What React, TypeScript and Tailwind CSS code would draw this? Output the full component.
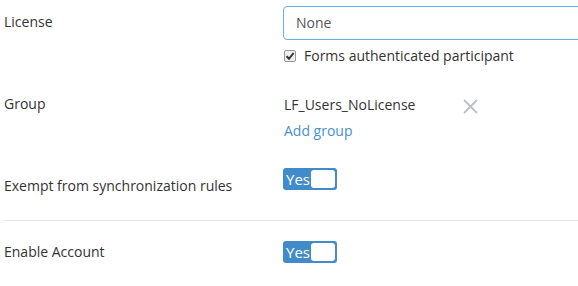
const Toggle = () => (
  <div className="w-[54px] h-[22px] bg-[#428bca] rounded-[3px] flex items-center justify-between pl-[3px] pr-[2px]">
    <span className="text-white text-[15px] leading-none">Yes</span>
    <span className="w-[24px] h-[18px] bg-white rounded-[3px]"></span>
  </div>
);

export default function App() {
  return (
    <div className="w-[578px] h-[286px] overflow-hidden bg-white font-['Open_Sans',sans-serif] text-[14px] text-[#333]">
      <div className="flex pt-[6px]">
        <div className="w-[283px] shrink-0 pl-[4px] leading-[32px]">License</div>
        <div className="flex-1 min-w-0">
          <div className="w-[320px] h-[34px] border border-[#66afe9] rounded-[4px] pl-[12px] pb-[2px] flex items-center text-[#555]">
            None
          </div>
          <div className="mt-[7px] h-[18px] flex items-center gap-[8px] pl-[1px] pb-[1px]">
            <span className="w-[12px] h-[12px] border border-[#999] rounded-[2px] bg-[#eee] flex items-center justify-center">
              <svg width="10" height="10" viewBox="0 0 10 10">
                <path d="M1.5 5.2 L4 7.8 L8.6 2" stroke="#333" strokeWidth="2" fill="none" />
              </svg>
            </span>
            <span>Forms authenticated participant</span>
          </div>
        </div>
      </div>

      <div className="flex mt-[29px]">
        <div className="w-[283px] shrink-0 pl-[4px] leading-[20px]">Group</div>
        <div className="flex-1 min-w-0">
          <div className="flex items-center h-[20px] pl-[1px]">
            <span className="w-[179px]">LF_Users_NoLicense</span>
            <svg width="15" height="15" viewBox="0 0 15 15" className="mt-[4px]">
              <path d="M1 1 L14 14 M14 1 L1 14" stroke="#b8c0cc" strokeWidth="1.8" />
            </svg>
          </div>
          <div className="mt-[7px] leading-[20px] pl-[1px] text-[#4a8fd4]">Add group</div>
        </div>
      </div>

      <div className="flex mt-[27px] items-start">
        <div className="w-[283px] shrink-0 pl-[4px] leading-[20px] mt-[8px]">Exempt from synchronization rules</div>
        <Toggle />
      </div>

      <div className="ml-[3px] mt-[24px] h-px bg-[#e5e5e5]"></div>

      <div className="flex mt-[20px] items-start">
        <div className="w-[283px] shrink-0 pl-[4px] leading-[20px] mt-[1px]">Enable Account</div>
        <Toggle />
      </div>
    </div>
  );
}
